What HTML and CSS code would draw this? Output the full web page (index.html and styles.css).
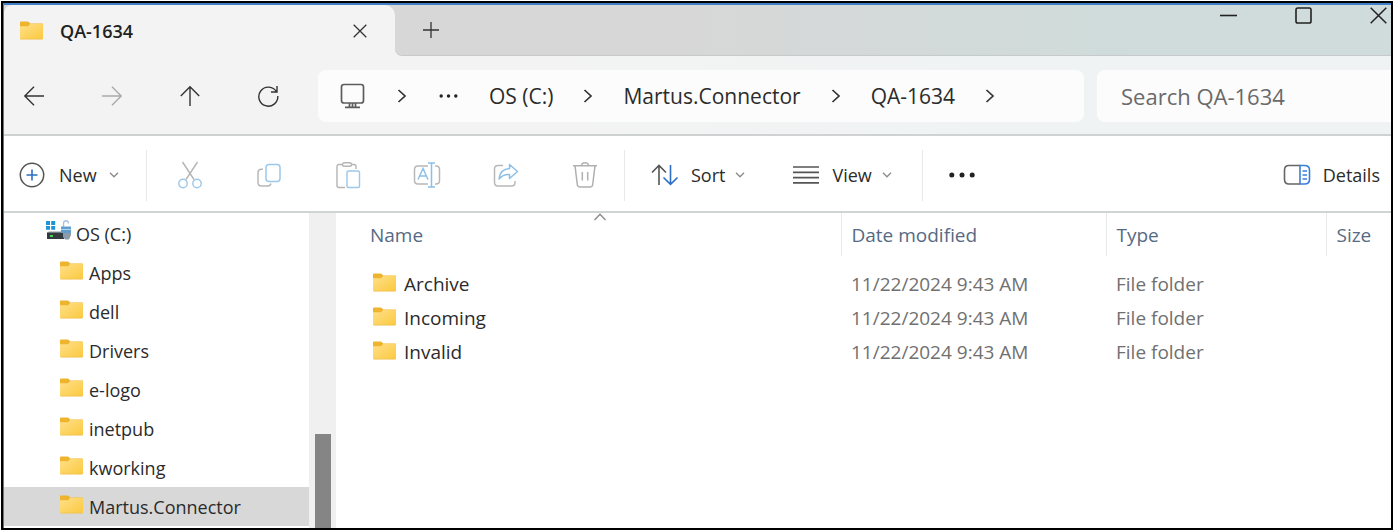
FILE: index.html
```html
<!DOCTYPE html>
<html lang="en">
<head>
<meta charset="utf-8">
<title>QA-1634</title>
<link rel="stylesheet" href="styles.css">
</head>
<body>
<svg class="sprites" aria-hidden="true">
  <defs>
    <linearGradient id="folder-fill" x1="0" y1="0" x2="1" y2="1">
      <stop offset="0" stop-color="#ffe08a"/>
      <stop offset="1" stop-color="#fbc93f"/>
    </linearGradient>
    <symbol id="folder" viewBox="0 0 23 19">
      <path d="M0 1.500Q0 .5 1 .5H7.500Q8.500 .5 9 1.200L10.200 2.500H22.500L23 3V8H0Z" fill="#eeb42e"/>
      <path d="M0 5.300H8.200L10.200 2.800H22.500L23 3.300V17.500L22.500 18.300H.5L0 17.500Z" fill="url(#folder-fill)"/>
      <path d="M.5 18H22.500" stroke="#f0c250" stroke-width=".8"/>
    </symbol>
    <symbol id="chev-right" viewBox="0 0 10 14">
      <path d="M1.500 1L8 7L1.500 13" fill="none" stroke="#333" stroke-width="1.700"/>
    </symbol>
    <symbol id="chev-down" viewBox="0 0 10 6">
      <path d="M1 .8L5 4.800L9 .8" fill="none" stroke="#8a8a8a" stroke-width="1.300"/>
    </symbol>
  </defs>
</svg>

<div class="window">
  <header class="titlebar">
    <div class="tab">
      <svg class="folder"><use href="#folder"/></svg>
      <span class="tab-title">QA-1634</span>
      <button class="icon-button tab-close" aria-label="Close tab">
        <svg width="14" height="14" viewBox="0 0 14 14"><path d="M.7 .7L13.300 13.300M13.300 .7L.7 13.300" stroke="#333" stroke-width="1.300"/></svg>
      </button>
    </div>
    <div class="tab-strip">
      <button class="icon-button" aria-label="New tab">
        <svg width="16" height="16" viewBox="0 0 16 16"><path d="M0 8H16M8 0V16" stroke="#333" stroke-width="1.300"/></svg>
      </button>
      <div class="window-controls">
        <button class="icon-button" aria-label="Minimize">
          <svg width="17" height="17" viewBox="0 0 17 17"><path d="M0 8.500H17" stroke="#222" stroke-width="1.600"/></svg>
        </button>
        <button class="icon-button" aria-label="Maximize">
          <svg width="17" height="17" viewBox="0 0 17 17"><rect x="1" y="1" width="15" height="15" rx="1.800" fill="none" stroke="#222" stroke-width="1.600"/></svg>
        </button>
        <button class="icon-button" aria-label="Close">
          <svg width="17" height="17" viewBox="0 0 17 17"><path d="M.7 .7L16.300 16.300M16.300 .7L.7 16.300" stroke="#222" stroke-width="1.500"/></svg>
        </button>
      </div>
    </div>
  </header>

  <div class="address-row">
    <nav class="history" aria-label="History">
      <button class="icon-button" aria-label="Back">
        <svg width="22" height="22" viewBox="0 0 22 22"><path d="M21 11H2M11 1.800L1.800 11L11 20.200" fill="none" stroke="#333" stroke-width="1.400"/></svg>
      </button>
      <button class="icon-button" aria-label="Forward" disabled>
        <svg width="22" height="22" viewBox="0 0 22 22"><path d="M1 11H20M11 1.800L20.200 11L11 20.200" fill="none" stroke="#aaa" stroke-width="1.400"/></svg>
      </button>
      <button class="icon-button" aria-label="Up">
        <svg width="22" height="22" viewBox="0 0 22 22"><path d="M11 21V2M1.800 11L11 1.800L20.200 11" fill="none" stroke="#333" stroke-width="1.400"/></svg>
      </button>
      <button class="icon-button" aria-label="Refresh">
        <svg width="22" height="22" viewBox="0 0 22 22"><path d="M19.500 6.800A9.500 9.500 0 1 0 20.800 11M20 1V7H14" fill="none" stroke="#333" stroke-width="1.400"/></svg>
      </button>
    </nav>
    <nav class="path" aria-label="Path">
      <button class="icon-button path-pc" aria-label="This PC">
        <svg width="25" height="26" viewBox="0 0 25 26"><path d="M4 1.500H21Q23.500 1.500 23.500 4V17.500Q23.500 20 21 20H4Q1.500 20 1.500 17.500V4Q1.500 1.500 4 1.500ZM9.500 20V24M12.500 20V24M15.500 20V24M5 24.300H20" fill="none" stroke="#5c5c5c" stroke-width="1.700"/></svg>
      </button>
      <svg class="chev-right chev-first"><use href="#chev-right"/></svg>
      <button class="icon-button path-more" aria-label="More folders">
        <svg width="20" height="4" viewBox="0 0 20 4"><g fill="#222"><circle cx="2.200" cy="2" r="1.700"/><circle cx="9.500" cy="2" r="1.700"/><circle cx="16.800" cy="2" r="1.700"/></g></svg>
      </button>
      <a class="crumb" href="#">OS (C:)</a>
      <svg class="chev-right"><use href="#chev-right"/></svg>
      <a class="crumb" href="#">Martus.Connector</a>
      <svg class="chev-right"><use href="#chev-right"/></svg>
      <a class="crumb" href="#">QA-1634</a>
      <svg class="chev-right"><use href="#chev-right"/></svg>
    </nav>
    <input class="search" type="search" placeholder="Search QA-1634" aria-label="Search QA-1634">
  </div>

  <div class="toolbar">
    <button class="tool tool-new">
      <svg width="26" height="26" viewBox="0 0 26 26"><circle cx="13" cy="13" r="11.700" fill="none" stroke="#555" stroke-width="1.500"/><path d="M7.500 13H18.500M13 7.500V18.500" stroke="#2d6fc4" stroke-width="1.600"/></svg>
      <span>New</span>
      <svg class="chev-down"><use href="#chev-down"/></svg>
    </button>
    <div class="tool-group">
      <button class="icon-button" aria-label="Cut" disabled>
        <svg width="28" height="28" viewBox="0 0 28 28" fill="none" stroke-width="1.400"><path d="M6.500 1L18 18.500M21.500 1L10 18.500" stroke="#b5b5b5"/><circle cx="7" cy="22.500" r="4.200" stroke="#9cc8ea"/><circle cx="21" cy="22.500" r="4.200" stroke="#9cc8ea"/></svg>
      </button>
      <button class="icon-button" aria-label="Copy" disabled>
        <svg width="28" height="28" viewBox="0 0 28 28" fill="none" stroke-width="1.500"><path d="M8 8.300H6.500Q3 8.300 3 12V21.500Q3 25 6.500 25H12Q15.500 25 16 22.500" stroke="#b8b8b8"/><rect x="11" y="3.500" width="14" height="17" rx="3" stroke="#9cc8ea"/></svg>
      </button>
      <button class="icon-button" aria-label="Paste" disabled>
        <svg width="28" height="28" viewBox="0 0 28 28" fill="none" stroke-width="1.400"><path d="M8.500 3.500H5Q3 3.500 3 5.500V24.500Q3 26.500 5 26.500H11M17.500 3.500H20Q22 3.500 22 5.500V8" stroke="#b5b5b5"/><rect x="8.500" y="1.700" width="9" height="3.600" rx="1.800" stroke="#b5b5b5"/><rect x="13" y="10" width="12.500" height="16.500" rx="1.500" stroke="#9cc8ea"/></svg>
      </button>
      <button class="icon-button" aria-label="Rename" disabled>
        <svg width="28" height="28" viewBox="0 0 28 28" fill="none" stroke-width="1.500"><path d="M15 5H5Q1.500 5 1.500 8.500V19.500Q1.500 23 5 23H15M22 5H23Q26.500 5 26.500 8.500V19.500Q26.500 23 23 23H22" stroke="#b8b8b8"/><path d="M5 18.500L10 7.500L15 18.500M6.800 15H13.200M18.500 2V26M15 2H22M15 26H22" stroke="#8dbfe6"/></svg>
      </button>
      <button class="icon-button" aria-label="Share" disabled>
        <svg width="28" height="28" viewBox="0 0 28 28" fill="none" stroke-width="1.500"><path d="M11 4.500H6Q2.500 4.500 2.500 8V21.500Q2.500 25 6 25H19.500Q23 25 23 21.500V20" stroke="#b8b8b8"/><path d="M17.500 3.500L25.500 10.500L17.500 17.500V13.500Q11 13 7 18Q8 8 17.500 7.500Z" stroke="#8dbfe6" stroke-linejoin="round"/></svg>
      </button>
      <button class="icon-button" aria-label="Delete" disabled>
        <svg width="28" height="28" viewBox="0 0 28 28" fill="none" stroke="#b0b0b0" stroke-width="1.500"><path d="M2 4.800H26M10.500 4.800Q10.500 1.700 14 1.700T17.500 4.800M4 4.800L6.300 23.500Q6.600 26 9 26H19Q21.400 26 21.700 23.500L24 4.800M11.300 11V19.500M16.700 11V19.500"/></svg>
      </button>
    </div>
    <div class="tool-group-text">
      <button class="tool">
        <svg width="28" height="22" viewBox="0 0 28 22" fill="none" stroke-width="1.600"><path d="M8 21V2M1 8.500L8 1.500L15 8.500" stroke="#555"/><path d="M19.500 1V20M12.500 13.500L19.500 20.300L26.500 13.500" stroke="#2d6fc4"/></svg>
        <span>Sort</span>
        <svg class="chev-down"><use href="#chev-down"/></svg>
      </button>
      <button class="tool">
        <svg width="28" height="22" viewBox="0 0 28 22"><path d="M1 3H27M1 8.300H27M1 13.600H27M1 18.900H27" stroke="#555" stroke-width="1.700"/></svg>
        <span>View</span>
        <svg class="chev-down"><use href="#chev-down"/></svg>
      </button>
    </div>
    <button class="icon-button more" aria-label="See more">
      <svg width="26" height="6" viewBox="0 0 26 6"><g fill="#222"><circle cx="2.800" cy="3" r="2.500"/><circle cx="13" cy="3" r="2.500"/><circle cx="23.200" cy="3" r="2.500"/></g></svg>
    </button>
    <button class="tool tool-details">
      <svg width="28" height="22" viewBox="0 0 28 22" fill="none" stroke-width="1.600"><path d="M17 1.500H6Q1.500 1.500 1.500 6V15.500Q1.500 20 6 20H17" stroke="#666"/><path d="M17 1.500H21.500Q26.500 1.500 26.500 6V15.500Q26.500 20 21.500 20H17ZM19.500 7H24M19.500 11H24M19.500 15H24" stroke="#3a7fd5"/></svg>
      <span>Details</span>
    </button>
  </div>

  <div class="content">
    <nav class="tree" aria-label="Folders">
      <a class="tree-item drive" href="#">
        <svg width="27" height="24" viewBox="0 0 27 24">
          <path d="M1 2H5V6H1ZM6.200 2H10.200V6H6.200ZM1 7H5V10.800H1ZM6.200 7H10.200V10.800H6.200Z" fill="#1c94d6"/>
          <path d="M4 12.300H20L22 14H2Z" fill="#b5bbc0"/>
          <rect x="2" y="13.500" width="17" height="6.500" fill="#333a40"/>
          <rect x="5" y="16" width="3" height="2" fill="#4bd05a"/>
          <path d="M18.500 8V4.500Q18.500 1.700 21 1.700Q23.500 1.700 23.500 4.500" fill="none" stroke="#a9c3dc" stroke-width="1.400"/>
          <rect x="16" y="7.500" width="10" height="6.500" fill="#5f9fce"/>
          <path d="M18 14H26V16L24 20.500H20L18 18Z" fill="#8d9ba8"/>
          <path d="M16 10.500H26" stroke="#b5d3ea" stroke-width="1"/>
        </svg>
        <span>OS (C:)</span>
      </a>
      <a class="tree-item" href="#"><svg class="folder"><use href="#folder"/></svg><span>Apps</span></a>
      <a class="tree-item" href="#"><svg class="folder"><use href="#folder"/></svg><span>dell</span></a>
      <a class="tree-item" href="#"><svg class="folder"><use href="#folder"/></svg><span>Drivers</span></a>
      <a class="tree-item" href="#"><svg class="folder"><use href="#folder"/></svg><span>e-logo</span></a>
      <a class="tree-item" href="#"><svg class="folder"><use href="#folder"/></svg><span>inetpub</span></a>
      <a class="tree-item" href="#"><svg class="folder"><use href="#folder"/></svg><span>kworking</span></a>
      <a class="tree-item selected" href="#"><svg class="folder"><use href="#folder"/></svg><span>Martus.Connector</span></a>
    </nav>
    <div class="scrollbar"><div class="thumb"></div></div>
    <main class="files">
      <table>
        <colgroup><col><col class="col-date"><col class="col-type"><col class="col-size"></colgroup>
        <thead>
          <tr>
            <th>Name<svg class="sort-mark" width="13" height="8" viewBox="0 0 13 8"><path d="M1 7L6.500 1.300L12 7" fill="none" stroke="#888" stroke-width="1.300"/></svg></th>
            <th>Date modified</th>
            <th>Type</th>
            <th>Size</th>
          </tr>
        </thead>
        <tbody>
          <tr><td><a class="file" href="#"><svg class="folder"><use href="#folder"/></svg><span>Archive</span></a></td><td>11/22/2024 9:43 AM</td><td>File folder</td><td></td></tr>
          <tr><td><a class="file" href="#"><svg class="folder"><use href="#folder"/></svg><span>Incoming</span></a></td><td>11/22/2024 9:43 AM</td><td>File folder</td><td></td></tr>
          <tr><td><a class="file" href="#"><svg class="folder"><use href="#folder"/></svg><span>Invalid</span></a></td><td>11/22/2024 9:43 AM</td><td>File folder</td><td></td></tr>
        </tbody>
      </table>
    </main>
  </div>
</div>
</body>
</html>
```
FILE: styles.css
```css
* { box-sizing: border-box; }

body {
  margin: 0;
  padding: 1px;
  background: #fff;
  font-family: "Open Sans", "Noto Sans", sans-serif;
  font-size: 18px;
  line-height: 24px;
  color: #2b2b2b;
}

button, input { font: inherit; color: inherit; }
button { border: 0; padding: 0; background: none; }
a { color: inherit; text-decoration: none; }
svg { display: block; flex: none; }

.sprites { position: absolute; width: 0; height: 0; }
.folder { width: 23px; height: 19px; }
.chev-right { width: 10px; height: 14px; }
.chev-down { width: 10px; height: 6px; }

.window {
  display: flex;
  flex-direction: column;
  min-height: calc(100vh - 2px);
  border: 2px solid #000;
  box-shadow: inset 1px 2px #3f7fc6;
  padding: 2px 0 0 1px;
  overflow: hidden;
}

.icon-button {
  display: flex;
  align-items: center;
  justify-content: center;
}

/* Title bar */
.titlebar {
  display: flex;
  height: 51px;
  background: linear-gradient(#d7d7d7 50%, #f3f3f3 50%);
}
.tab {
  display: flex;
  align-items: center;
  width: 391px;
  padding: 0 28px 0 16px;
  border-radius: 8px 10px 0 0;
  background: #f3f3f3;
}
.tab-title {
  flex: 1;
  margin-left: 17px;
  font-weight: 600;
  color: #1f1f1f;
}
.tab-strip {
  flex: 1;
  display: flex;
  align-items: center;
  padding-left: 28px;
  border-bottom: 1px solid #c6cbca;
  border-bottom-left-radius: 7px;
  background: linear-gradient(90deg, #d7d7d7 30%, #cfdcdb 75%);
}
.window-controls {
  display: flex;
  align-self: flex-start;
  gap: 58px;
  margin-left: auto;
  padding: 2px 4px 0 0;
}

/* Address row */
.address-row {
  display: flex;
  align-items: center;
  height: 80px;
  padding-top: 2px;
  border-bottom: 2px solid #cfd2d2;
  background: linear-gradient(90deg, #f3f3f3 40%, #eff3f4 80%);
}
.history {
  display: flex;
  gap: 38px;
  padding: 0 30px 0 10px;
}
.history .icon-button { width: 40px; height: 40px; }
.path {
  flex: 1;
  display: flex;
  align-items: center;
  gap: 30px;
  height: 52px;
  padding-left: 22px;
  border-radius: 8px;
  background: #fcfcfc;
  font-size: 21px;
  white-space: nowrap;
}
.path-pc { margin-right: 2px; }
.chev-first { margin-right: 2px; }
.search {
  width: 294px;
  height: 52px;
  margin-left: 13px;
  padding: 0 0 0 24px;
  border: 0;
  border-radius: 8px 0 0 8px;
  background: #fcfcfc;
  font-size: 22px;
}
.search::placeholder { color: #6a6a6a; opacity: 1; }

/* Command bar */
.toolbar {
  display: flex;
  align-items: center;
  height: 77px;
  padding: 3px 11px 0 15px;
  border-bottom: 2px solid #cfd5d4;
  background: #fff;
}
.tool {
  display: flex;
  align-items: center;
  gap: 12px;
  white-space: nowrap;
}
.tool .chev-down { margin-left: -2px; }
.tool-new { gap: 14px; width: 127px; }
.tool-group {
  display: flex;
  height: 51px;
  padding-left: 4px;
  border-left: 1px solid #e8e8e8;
  border-right: 1px solid #e8e8e8;
  width: 479px;
}
.tool-group .icon-button { flex: 1; }
.tool-group-text {
  display: flex;
  gap: 47px;
  width: 298px;
  height: 51px;
  padding-left: 26px;
  border-right: 1px solid #e8e8e8;
}
.more { margin-left: 26px; }
.tool-details { margin-left: auto; }

/* Content */
.content {
  flex: 1;
  display: flex;
  background: #fff;
}
.tree {
  width: 305px;
  padding: 1px 0 2px;
}
.tree-item {
  display: flex;
  align-items: center;
  gap: 6px;
  height: 39px;
  padding-left: 56px;
}
.tree-item .folder { margin-bottom: 4px; }
.tree-item.drive { gap: 4px; padding-left: 41px; }
.tree-item.drive svg { margin-bottom: 6px; }
.tree-item.selected { background: #d8d8d8; }

.scrollbar {
  display: flex;
  align-items: flex-end;
  justify-content: center;
  width: 27px;
  background: #f0f0f0;
}
.thumb {
  width: 16px;
  height: 30%;
  background: #858585;
}

.files {
  flex: 1;
  padding-left: 24px;
}
table {
  width: 100%;
  table-layout: fixed;
  border-collapse: collapse;
  font-size: 19px;
  white-space: nowrap;
}
.col-date { width: 265px; }
.col-type { width: 220px; }
.col-size { width: 65px; }
th {
  position: relative;
  height: 43px;
  padding: 0 0 0 10px;
  border-right: 1px solid #e6e9ea;
  font-weight: 400;
  text-align: left;
  color: #566a84;
}
th:last-child { border-right: 0; }
.sort-mark {
  position: absolute;
  top: 0;
  left: 50%;
  transform: translateX(-50%);
}
tbody::before {
  content: "";
  display: block;
  height: 11px;
}
td {
  height: 34px;
  padding: 0 0 0 10px;
  color: #707070;
}
.file {
  display: flex;
  align-items: center;
  gap: 8px;
  padding-left: 3px;
  color: #2b2b2b;
}
.file .folder { margin-bottom: 4px; }
```
